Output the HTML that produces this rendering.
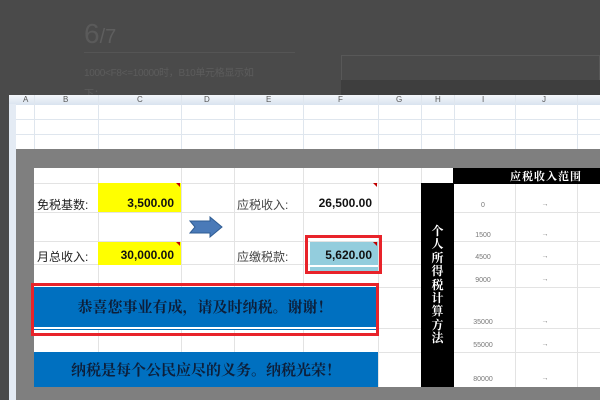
<!DOCTYPE html><html><head><meta charset="utf-8"><style>
*{margin:0;padding:0;box-sizing:border-box}
body{width:600px;height:400px;overflow:hidden;background:#4a4a4a;position:relative;font-family:"Liberation Sans","Noto Sans CJK SC",sans-serif}
.a{position:absolute}
.t{font-size:12px;color:#222}
.n{font-size:12px;font-weight:bold;color:#111;text-align:right}
.s{font-size:7px;color:#777;text-align:center;width:40px}
.c{font-size:8px;color:#555}
</style></head><body>
<div class="a" style="left:84px;top:18px;font-size:28px;color:#5a5a5a">6<span style="font-size:20px;color:#5e5e5e">/7</span></div>
<div class="a" style="left:84px;top:52px;width:211px;height:1px;background:#555"></div>
<div class="a" style="left:84px;top:64px;font-size:10px;color:#5c5c5c;letter-spacing:-0.3px">1000&lt;F8&lt;=10000时，B10单元格显示如</div>
<div class="a" style="left:84px;top:85px;font-size:10px;color:#5c5c5c">下：</div>
<div class="a" style="left:341px;top:55px;width:259px;height:26px;border:1px solid #585858"></div>
<div class="a" style="left:341px;top:80px;width:259px;height:15px;background:#3e3e3e"></div>
<!-- sheet -->
<div class="a" style="left:9px;top:95px;width:591px;height:305px;background:#fff"></div>
<div class="a" style="left:9px;top:95px;width:591px;height:10px;background:linear-gradient(#f4f7fb,#d9e3ef)"></div>
<div class="a" style="left:9px;top:104px;width:7px;height:296px;background:#e4ebf4"></div>
<div class="a" style="left:16px;top:119px;width:584px;height:1px;background:#dfe6ee;box-shadow:0 15px #dfe6ee"></div>
<span class="a c" style="left:23px;top:95px">A</span><span class="a c" style="left:63px;top:95px">B</span><span class="a c" style="left:137px;top:95px">C</span><span class="a c" style="left:204px;top:95px">D</span><span class="a c" style="left:266px;top:95px">E</span><span class="a c" style="left:338px;top:95px">F</span><span class="a c" style="left:396px;top:95px">G</span><span class="a c" style="left:435px;top:95px">H</span><span class="a c" style="left:482px;top:95px">I</span><span class="a c" style="left:542px;top:95px">J</span>
<div class="a" style="left:34px;top:95px;width:1px;height:55px;background:#dfe6ee;box-shadow:64px 0 #dfe6ee,147px 0 #dfe6ee,200px 0 #dfe6ee,269px 0 #dfe6ee,344px 0 #dfe6ee,387px 0 #dfe6ee,420px 0 #dfe6ee,481px 0 #dfe6ee,543px 0 #dfe6ee"></div>
<!-- gray frame -->
<div class="a" style="left:16px;top:149px;width:584px;height:251px;background:#7f7f7f"></div>
<div class="a" style="left:34px;top:168px;width:566px;height:219px;background:#fff"></div>
<div class="a" style="left:34px;top:183px;width:566px;height:1px;background:#e3e3e3;box-shadow:0 29px #e3e3e3,0 58px #e3e3e3,0 81px #e3e3e3,0 104px #e3e3e3,0 145px #e3e3e3,0 169px #e3e3e3"></div>
<div class="a" style="left:98px;top:168px;width:1px;height:219px;background:#e3e3e3;box-shadow:83px 0 #e3e3e3,136px 0 #e3e3e3,205px 0 #e3e3e3,280px 0 #e3e3e3,323px 0 #e3e3e3,417px 0 #e3e3e3,479px 0 #e3e3e3"></div>
<div class="a" style="left:453px;top:168px;width:147px;height:16px;background:#000;color:#fff;font-size:11px;font-weight:bold;font-family:'Noto Serif CJK SC',serif;padding-left:57px;line-height:16px;letter-spacing:1px">应税收入范围</div>
<div class="a" style="left:421px;top:183px;width:33px;height:204px;background:#000"></div>
<div class="a" style="left:421px;top:224px;width:33px;color:#fff;font-size:12px;font-weight:bold;font-family:'Noto Serif CJK SC',serif;text-align:center;line-height:13.4px">个<br>人<br>所<br>得<br>税<br>计<br>算<br>方<br>法</div>
<div class="a" style="left:98px;top:183px;width:83px;height:29px;background:#ff0"></div>
<div class="a" style="left:98px;top:242px;width:83px;height:23px;background:#ff0"></div>
<div class="a" style="left:310px;top:242px;width:68px;height:30px;background:#93cddd"></div>
<div class="a" style="left:310px;top:265px;width:68px;height:2px;background:#fff"></div>
<div class="a t" style="left:37px;top:196px">免税基数:</div>
<div class="a n" style="left:100px;top:196px;width:74px">3,500.00</div>
<div class="a t" style="left:37px;top:248px">月总收入:</div>
<div class="a n" style="left:100px;top:248px;width:74px">30,000.00</div>
<div class="a t" style="left:237px;top:196px;color:#444">应税收入:</div>
<div class="a n" style="left:300px;top:196px;width:72px">26,500.00</div>
<div class="a t" style="left:237px;top:248px;color:#444">应缴税款:</div>
<div class="a n" style="left:300px;top:248px;width:72px">5,620.00</div>
<div class="a" style="left:305px;top:235px;width:77px;height:39px;border:3px solid #e8232a"></div>
<svg class="a" style="left:189px;top:216px" width="34" height="22"><path d="M1 5H21V1L33 11 21 21V17H1L6 11Z" fill="#4a7ab8" stroke="#2f5c93"/></svg>
<div class="a" style="left:34px;top:287px;width:344px;height:43px;background:#0070c0"></div>
<div class="a" style="left:34px;top:327px;width:344px;height:2px;background:#fff"></div>
<div class="a" style="left:31px;top:283px;width:348px;height:53px;border:3px solid #e8232a;font-family:'Noto Serif CJK SC',serif;font-weight:bold;color:#0d1f3a;font-size:15px;text-align:center;line-height:42px">恭喜您事业有成，请及时纳税。谢谢！</div>
<div class="a" style="left:34px;top:352px;width:344px;height:35px;background:#0070c0;font-family:'Noto Serif CJK SC',serif;font-weight:bold;color:#0d1f3a;font-size:15px;text-align:center;line-height:35px">纳税是每个公民应尽的义务。纳税光荣！</div>
<div class="a s" style="left:463px;top:202px">0</div><div class="a s" style="left:463px;top:232px">1500</div><div class="a s" style="left:463px;top:254px">4500</div><div class="a s" style="left:463px;top:277px">9000</div><div class="a s" style="left:463px;top:319px">35000</div><div class="a s" style="left:463px;top:342px">55000</div><div class="a s" style="left:463px;top:376px">80000</div>
<div class="a s" style="left:525px;top:201px">→</div><div class="a s" style="left:525px;top:231px">→</div><div class="a s" style="left:525px;top:253px">→</div><div class="a s" style="left:525px;top:276px">→</div><div class="a s" style="left:525px;top:318px">→</div><div class="a s" style="left:525px;top:341px">→</div><div class="a s" style="left:525px;top:375px">→</div>
<div class="a" style="left:176px;top:183px;border-left:4px solid transparent;border-top:4px solid #c00000"></div>
<div class="a" style="left:373px;top:183px;border-left:4px solid transparent;border-top:4px solid #c00000"></div>
<div class="a" style="left:373px;top:242px;border-left:4px solid transparent;border-top:4px solid #c00000"></div>
<div class="a" style="left:176px;top:242px;border-left:4px solid transparent;border-top:4px solid #c00000"></div>
</body></html>
